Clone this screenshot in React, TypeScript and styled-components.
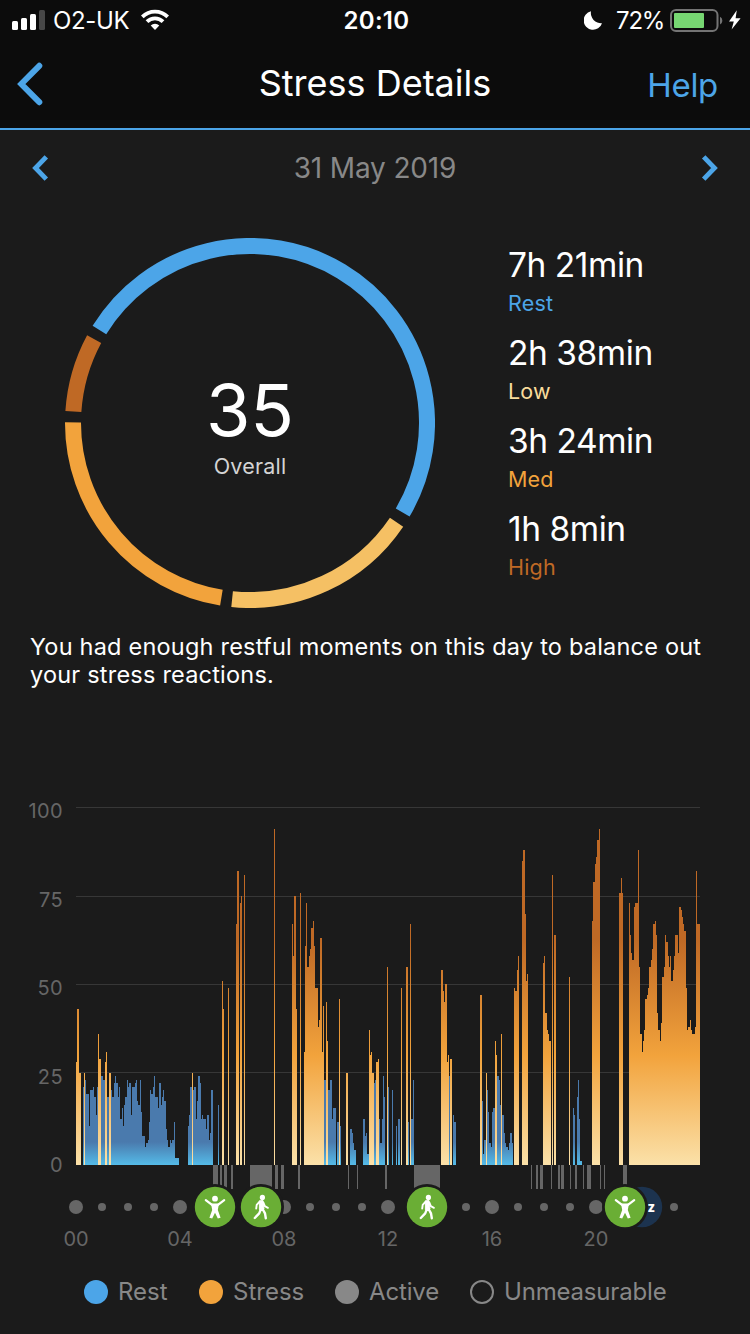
import React from 'react';
import styled, { createGlobalStyle } from 'styled-components';

const blue = '#4ca5e8';

const GlobalStyle = createGlobalStyle`
  body {
    margin: 0;
    background: #1b1b1b;
    font-family: Inter, 'Liberation Sans', sans-serif;
  }
`;

const Screen = styled.div`
  display: flex;
  flex-direction: column;
  width: 750px;
  height: 1334px;
  overflow: hidden;
  background: #1b1b1b;
  color: #fff;
`;

const Top = styled.header`
  height: 128px;
  background: #0c0c0c;
  border-bottom: 2px solid ${blue};
`;

const Label = styled.span<{ $size: number; $track?: number; $color?: string; $weight?: number; $line?: number }>`
  font-size: ${(p) => p.$size}px;
  letter-spacing: ${(p) => p.$track ?? 0}px;
  color: ${(p) => p.$color ?? '#fff'};
  font-weight: ${(p) => p.$weight ?? 400};
  line-height: ${(p) => p.$line ?? 40}px;
  white-space: nowrap;
`;

const StatusBar = styled.div`
  display: grid;
  grid-template-columns: 1fr auto 1fr;
  height: 41px;
  padding: 0 9px 0 12px;
`;

const StatusGroup = styled.div<{ $end?: boolean }>`
  display: flex;
  align-items: center;
  justify-content: ${(p) => (p.$end ? 'flex-end' : 'flex-start')};
`;

const Carrier = styled.div`
  flex: none;
  width: 96px;
  padding-left: 8px;
  box-sizing: border-box;
`;

const Percent = styled.div`
  width: 54px;
  margin-left: 14px;
`;

const NavBar = styled.div`
  display: grid;
  grid-template-columns: 1fr auto 1fr;
  align-items: center;
  height: 84px;
  padding: 0 16px;
`;

const HelpLink = styled.div`
  justify-self: end;
  padding: 3px 16px 0 0;
`;

const DateRow = styled.div`
  display: flex;
  justify-content: space-between;
  align-items: center;
  height: 76px;
  padding: 0 30px;
`;

const Summary = styled.section`
  display: flex;
  height: 370px;
  padding: 32px 0 0 65px;
`;

const RingBox = styled.div`
  display: grid;
  width: 370px;
  height: 370px;
  > * {
    grid-area: 1 / 1;
  }
`;

const RingText = styled.div`
  display: flex;
  flex-direction: column;
  align-items: center;
  padding-top: 131px;
`;

const Stats = styled.dl`
  margin: 7px 0 0 73px;
`;

const Stat = styled.div`
  display: flex;
  flex-direction: column;
  height: 88px;
`;

const Message = styled.p`
  margin: 25px 0 0 30px;
  height: 56px;
`;

const ChartRow = styled.section`
  display: flex;
  margin-top: 111px;
`;

const YAxis = styled.div`
  display: flex;
  flex-direction: column;
  align-items: flex-end;
  width: 63px;
  height: 430px;
`;

const YTick = styled.div`
  flex: none;
  height: 88.5px;
`;

const XAxis = styled.div`
  display: grid;
  grid-template-columns: repeat(6, 104px);
  height: 30px;
  padding-left: 24px;
  text-align: center;
`;

const Legend = styled.footer`
  display: grid;
  grid-template-columns: 115px 136px 135px auto;
  margin-top: 12px;
  padding-left: 84px;
`;

const LegendItem = styled.div`
  display: flex;
  align-items: center;
  gap: 10px;
`;

const Swatch = styled.span<{ $fill?: string }>`
  box-sizing: border-box;
  width: 24px;
  height: 24px;
  border-radius: 50%;
  background: ${(p) => p.$fill ?? 'transparent'};
  border: ${(p) => (p.$fill ? 'none' : '2px solid #888')};
`;

const stats = [
  { value: '7h 21min', name: 'Rest', color: blue },
  { value: '2h 38min', name: 'Low', color: '#f9dc9c' },
  { value: '3h 24min', name: 'Med', color: '#f2a33c' },
  { value: '1h 8min', name: 'High', color: '#bf6925' },
];

const arcs = [
  { from: 211.7, to: 390.4, color: blue },
  { from: 34.1, to: 95.8, color: '#f5c064' },
  { from: 99.3, to: 180.2, color: '#f2a33c' },
  { from: 183.7, to: 208.3, color: '#bf6925' },
];

// Each run: start offset, then kind (o = stress, b = rest), width and height of every step.
const runs = [
  '0 o1:103 o2:156 o2:92',
  '7 b1:78 o1:92 b1:85 b3:71 b1:39 b3:75 b1:78 b2:68 b1:50 b1:78 o1:131 o2:106 b2:89 b2:85 o1:103 o1:113 b2:68 o2:92 b1:75 b2:68 b1:82 b1:89 b2:82 b1:68 b1:78 b2:46 b1:57 b1:39 b1:60 b2:68 b1:85 b1:78 b2:82 b1:50 b3:78 b1:82 b1:85 b1:64 b2:60 b1:85 b1:53 b3:29 b1:18 b2:22 b1:25 b1:43 b1:75 b2:71 b1:78 b1:89 b3:68 b1:57 b2:82 b1:60 b1:68 b1:75 b2:64 b1:36 b1:25 b2:18 b1:25 b1:22 b2:25 b1:43 b4:7',
  '112 b1:39 b1:50 b2:78 o1:92 b1:75 b2:78 b1:46 b1:64 b2:89 b1:82 b1:46 b1:50 b3:46 b1:36 b2:50 b1:25 b1:32 b2:75',
  '142 b1:60',
  '146 o1:184 o1:156',
  '152 o1:177',
  '160 o1:241 o2:294',
  '164 o1:262 o1:269',
  '168 o1:290',
  '198 o1:336',
  '216 o1:241 o1:209 o2:269 o1:156',
  '224 o1:272',
  '228 o1:113 o1:219 o1:262 o2:198 o1:209 o1:216 o2:237 o1:244 o1:219 o3:177 o1:138 o1:145 o2:227 o1:113 o1:159 b2:85 o1:163 o1:124 b2:75 b2:85 b1:46 b3:57',
  '261 b2:43 o1:166 b1:39',
  '270 o2:92',
  '274 b2:36 b1:32 b1:22 b2:15',
  '287 b2:46 b1:29 b1:32 b2:11 o1:135 o1:110 o1:113 o2:92 b1:82 b1:85 o2:103 o1:106 b1:46 b2:22 b1:46 b1:89 b1:68',
  '311 o1:198 b1:78',
  '316 b1:75',
  '320 b1:39',
  '322 b2:46',
  '325 o1:177',
  '330 o2:198 b1:43',
  '334 o1:241 b2:46 b1:85',
  '365 o2:195 o1:174 o1:163 o2:181 o1:103 o1:110 b1:89 o2:106',
  '377 b1:50 b2:43',
  '404 o2:170 b1:64 b1:11 b2:25 o1:92 b1:75 b1:53 b2:22 b1:18 b1:53 b2:57 o1:124 o1:110 b2:89 b1:85 b1:60 o1:131 b2:50 b1:32 b1:22 b2:18 b1:15 b1:22 b2:32 b1:22',
  '438 o1:177 o2:174 o1:195 o1:209',
  '446 o1:304 o2:315 o1:251 o1:184 o1:191',
  '467 o1:202 o1:209 o2:152 o1:135 o1:131 o2:124',
  '476 o1:290',
  '478 o2:230',
  '493 o1:188',
  '497 b1:57 b1:50',
  '501 b1:68 b1:85 b1:46 b2:4',
  '516 o1:244 o2:283 o1:301 o1:308 o2:325 o1:336',
  '543 o2:272 o1:287 o1:272',
  '553 o1:262 o1:230 o1:212 o2:205 o1:258 o3:262 o1:315 o1:198 o2:131 o1:113 o1:124 o1:135 o2:166 o1:170 o1:177 o2:198 o1:205 o1:216 o2:241 o1:244 o1:230 o1:152 o2:135 o1:124 o1:142 o2:188 o1:198 o1:230 o2:223 o1:209 o1:198 o1:209 o2:184 o1:195 o1:209 o3:230 o1:212 o2:258 o1:255 o1:248 o1:241 o2:234 o1:177 o1:135 o2:138 o1:145 o1:135 o3:131 o1:138 o1:294 o3:241',
];

const activeSpans: [number, number][] = [
  [137, 5], [144, 2], [148, 3], [155, 2], [174, 22], [199, 3], [205, 3], [222, 2],
  [272, 1], [281, 1], [309, 2], [338, 26], [455, 1], [460, 2], [464, 3], [475, 1],
  [482, 2], [485, 3], [494, 1], [499, 2], [507, 1], [511, 4], [524, 1], [528, 1], [547, 4],
];

// The baseline of the bars sits at y = 365; x = 13 is midnight.
const BASE = 365;
const LEFT = 13;

function barPath(kind: string) {
  let d = '';
  runs.forEach((run) => {
    const [start, ...steps] = run.split(' ');
    let x = LEFT + Number(start);
    steps.forEach((step) => {
      const [w, h] = step.slice(1).split(':').map(Number);
      if (step[0] === kind) d += `M${x} ${BASE}v${-h}h${w}v${h}z`;
      x += w;
    });
  });
  return d;
}

function arcPath(from: number, to: number) {
  const point = (deg: number) => {
    const a = (deg * Math.PI) / 180;
    return `${185 + 177 * Math.cos(a)} ${185 + 177 * Math.sin(a)}`;
  };
  return `M${point(from)}A177 177 0 ${to - from > 180 ? 1 : 0} 1 ${point(to)}`;
}

function Badge({ x, children }: { x: number; children: React.ReactNode }) {
  return (
    <g transform={`translate(${x} 407)`}>
      <circle r="23" fill="#1b1b1b" />
      <circle r="20.2" fill="#6aae35" />
      {children}
    </g>
  );
}

function Stretcher() {
  return (
    <g fill="#fff">
      <circle cy="-8.3" r="2.9" />
      <path d="M-9.2-6.9-3-2.2M9.2-6.9 3-2.2" stroke="#fff" strokeWidth="2.2" strokeLinecap="round" />
      <path d="M-4-3.4H4L2.8 3 5.6 10.7 2.8 11.6 0 5.8-2.8 11.6-5.6 10.7-2.8 3z" />
    </g>
  );
}

function Walker() {
  return (
    <g fill="none" stroke="#fff" strokeLinecap="round" strokeLinejoin="round">
      <circle cx="1.4" cy="-9.6" r="2.6" fill="#fff" stroke="none" />
      <path d="M-1.2-6.2 2-6.4 3 2-1.2 2.6z" fill="#fff" strokeWidth="1" />
      <path d="M-1.4-5.4-4.3-2.2-4.8 1.6M2.4-4.4 3.8-.8 6.9.8" strokeWidth="1.9" />
      <path d="M-.2 2.4-1.8 6.4-6.2 11M1.6 2 4 6.4 4.8 11.2" strokeWidth="2.4" />
    </g>
  );
}

function Chart() {
  const dots = [];
  for (let i = 0; i < 24; i += 1) {
    dots.push(<circle key={i} cx={LEFT + i * 26} cy="407" r={i % 4 === 0 ? 7 : 4} fill="#666" />);
  }
  return (
    <svg width="687" height="430" viewBox="0 0 687 430">
      <defs>
        <linearGradient id="stress" gradientUnits="userSpaceOnUse" x1="0" y1="365" x2="0" y2="0">
          <stop offset="0" stopColor="#fbe1a9" />
          <stop offset="0.3" stopColor="#f2a33c" />
          <stop offset="0.62" stopColor="#bf6925" />
        </linearGradient>
        <linearGradient id="rest" gradientUnits="userSpaceOnUse" x1="0" y1="365" x2="0" y2="342">
          <stop offset="0" stopColor="#55bbe8" />
          <stop offset="1" stopColor="#4a7aad" />
        </linearGradient>
      </defs>
      <path d="M13 7.5H637M13 96.5H637M13 184.5H637M13 272.5H637" stroke="#373737" />
      <g shapeRendering="crispEdges">
        <path d={barPath('b')} fill="url(#rest)" />
        <path d={barPath('o')} fill="url(#stress)" />
        {activeSpans.map(([x, w]) => (
          <rect key={x} x={LEFT + x} y={BASE} width={w} height="24" fill="#666" />
        ))}
      </g>
      {dots}
      <circle cx="579" cy="407" r="20.2" fill="#1c334f" />
      <text x="584.5" y="412" fontSize="13" fontWeight="800" fill="#fff">z</text>
      <Badge x={152}><Stretcher /></Badge>
      <Badge x={198}><Walker /></Badge>
      <Badge x={364}><Walker /></Badge>
      <Badge x={562}><Stretcher /></Badge>
    </svg>
  );
}

export default function App() {
  return (
    <Screen>
      <GlobalStyle />
      <Top>
        <StatusBar>
          <StatusGroup>
            <svg width="33" height="41" viewBox="12 0 33 41" fill="#fff">
              <rect x="12" y="21" width="6" height="9" rx="1.5" />
              <rect x="21" y="18" width="6" height="12" rx="1.5" />
              <rect x="30" y="14" width="6" height="16" rx="1.5" />
              <rect x="39" y="10" width="6" height="20" rx="1.5" fill="#474747" />
            </svg>
            <Carrier><Label $size={24} $track={-0.35} $line={41}>O2-UK</Label></Carrier>
            <svg width="28" height="41" viewBox="141 0 28 41">
              <g fill="none" stroke="#fff" strokeWidth="3.8">
                <path d="M142.3 16.8A18 18 0 0 1 167.7 16.8" />
                <path d="M147 21.6A11.3 11.3 0 0 1 163 21.6" />
              </g>
              <path d="M150.7 25.5A6.1 6.1 0 0 1 159.3 25.5L155 29.9z" fill="#fff" />
            </svg>
          </StatusGroup>
          <Label $size={24} $weight={600} $track={0.3} $line={41}>20:10</Label>
          <StatusGroup $end>
            <svg width="18" height="41" viewBox="584 0 18 41">
              <path d="M591 11.2A10.3 10.3 0 0 0 602 23.2 9.4 9.4 0 1 1 591 11.2z" fill="#fff" />
            </svg>
            <Percent><Label $size={24} $track={-1.2} $line={41}>72%</Label></Percent>
            <svg width="71" height="41" viewBox="670 0 71 41">
              <rect x="671" y="10" width="46.5" height="21" rx="5" fill="none" stroke="#747474" strokeWidth="2" />
              <rect x="674" y="13" width="30" height="15" rx="1" fill="#77d772" />
              <path d="M720 16.8a4.4 4.4 0 0 1 0 7.8z" fill="#747474" />
              <path d="M736.8 10.2 729 21.4H733.8L731.6 29.6 740.6 18.3H735.6z" fill="#fff" />
            </svg>
          </StatusGroup>
        </StatusBar>
        <NavBar>
          <svg width="28" height="46" viewBox="16 60 28 46">
            <path d="M39.3 65.8 21.3 84 39.3 102.2" fill="none" stroke={blue} strokeWidth="6" strokeLinecap="round" />
          </svg>
          <Label $size={36}>Stress Details</Label>
          <HelpLink><Label $size={33} $track={-0.3} $color={blue}>Help</Label></HelpLink>
        </NavBar>
      </Top>
      <DateRow>
        <svg width="20" height="28" viewBox="0 0 20 28">
          <path d="M16.3 2.8 5.5 14 16.3 25.2" fill="none" stroke={blue} strokeWidth="4.8" />
        </svg>
        <Label $size={28} $track={-0.15} $color="#888">31 May 2019</Label>
        <svg width="20" height="28" viewBox="0 0 20 28">
          <path d="M3.7 2.8 14.5 14 3.7 25.2" fill="none" stroke={blue} strokeWidth="4.8" />
        </svg>
      </DateRow>
      <Summary>
        <RingBox>
          <svg width="370" height="370" viewBox="0 0 370 370">
            {arcs.map((a) => (
              <path key={a.color} d={arcPath(a.from, a.to)} fill="none" stroke={a.color} strokeWidth="16" />
            ))}
          </svg>
          <RingText>
            <Label $size={72} $line={82}>35</Label>
            <Label $size={21.5} $line={30} $track={0.2} $color="#d4d4d4">Overall</Label>
          </RingText>
        </RingBox>
        <Stats>
          {stats.map((s) => (
            <Stat key={s.name}>
              <Label $size={33.5} $track={-0.45}>{s.value}</Label>
              <Label $size={21.5} $line={36} $track={0.2} $color={s.color}>{s.name}</Label>
            </Stat>
          ))}
        </Stats>
      </Summary>
      <Message>
        <Label $size={23.5} $line={28} $track={0.21}>
          You had enough restful moments on this day to balance out
          <br />
          your stress reactions.
        </Label>
      </Message>
      <ChartRow>
        <YAxis>
          {[100, 75, 50, 25, 0].map((v) => (
            <YTick key={v}><Label $size={20} $line={22} $track={0.4} $color="#666">{v}</Label></YTick>
          ))}
        </YAxis>
        <Chart />
      </ChartRow>
      <XAxis>
        {['00', '04', '08', '12', '16', '20'].map((h) => (
          <Label key={h} $size={20} $line={18} $color="#666">{h}</Label>
        ))}
      </XAxis>
      <Legend>
        <LegendItem><Swatch $fill={blue} /><Label $size={24} $color="#888">Rest</Label></LegendItem>
        <LegendItem><Swatch $fill="#f2a33c" /><Label $size={24} $color="#888">Stress</Label></LegendItem>
        <LegendItem><Swatch $fill="#888" /><Label $size={24} $track={-0.15} $color="#888">Active</Label></LegendItem>
        <LegendItem><Swatch /><Label $size={24} $track={-0.18} $color="#888">Unmeasurable</Label></LegendItem>
      </Legend>
    </Screen>
  );
}
